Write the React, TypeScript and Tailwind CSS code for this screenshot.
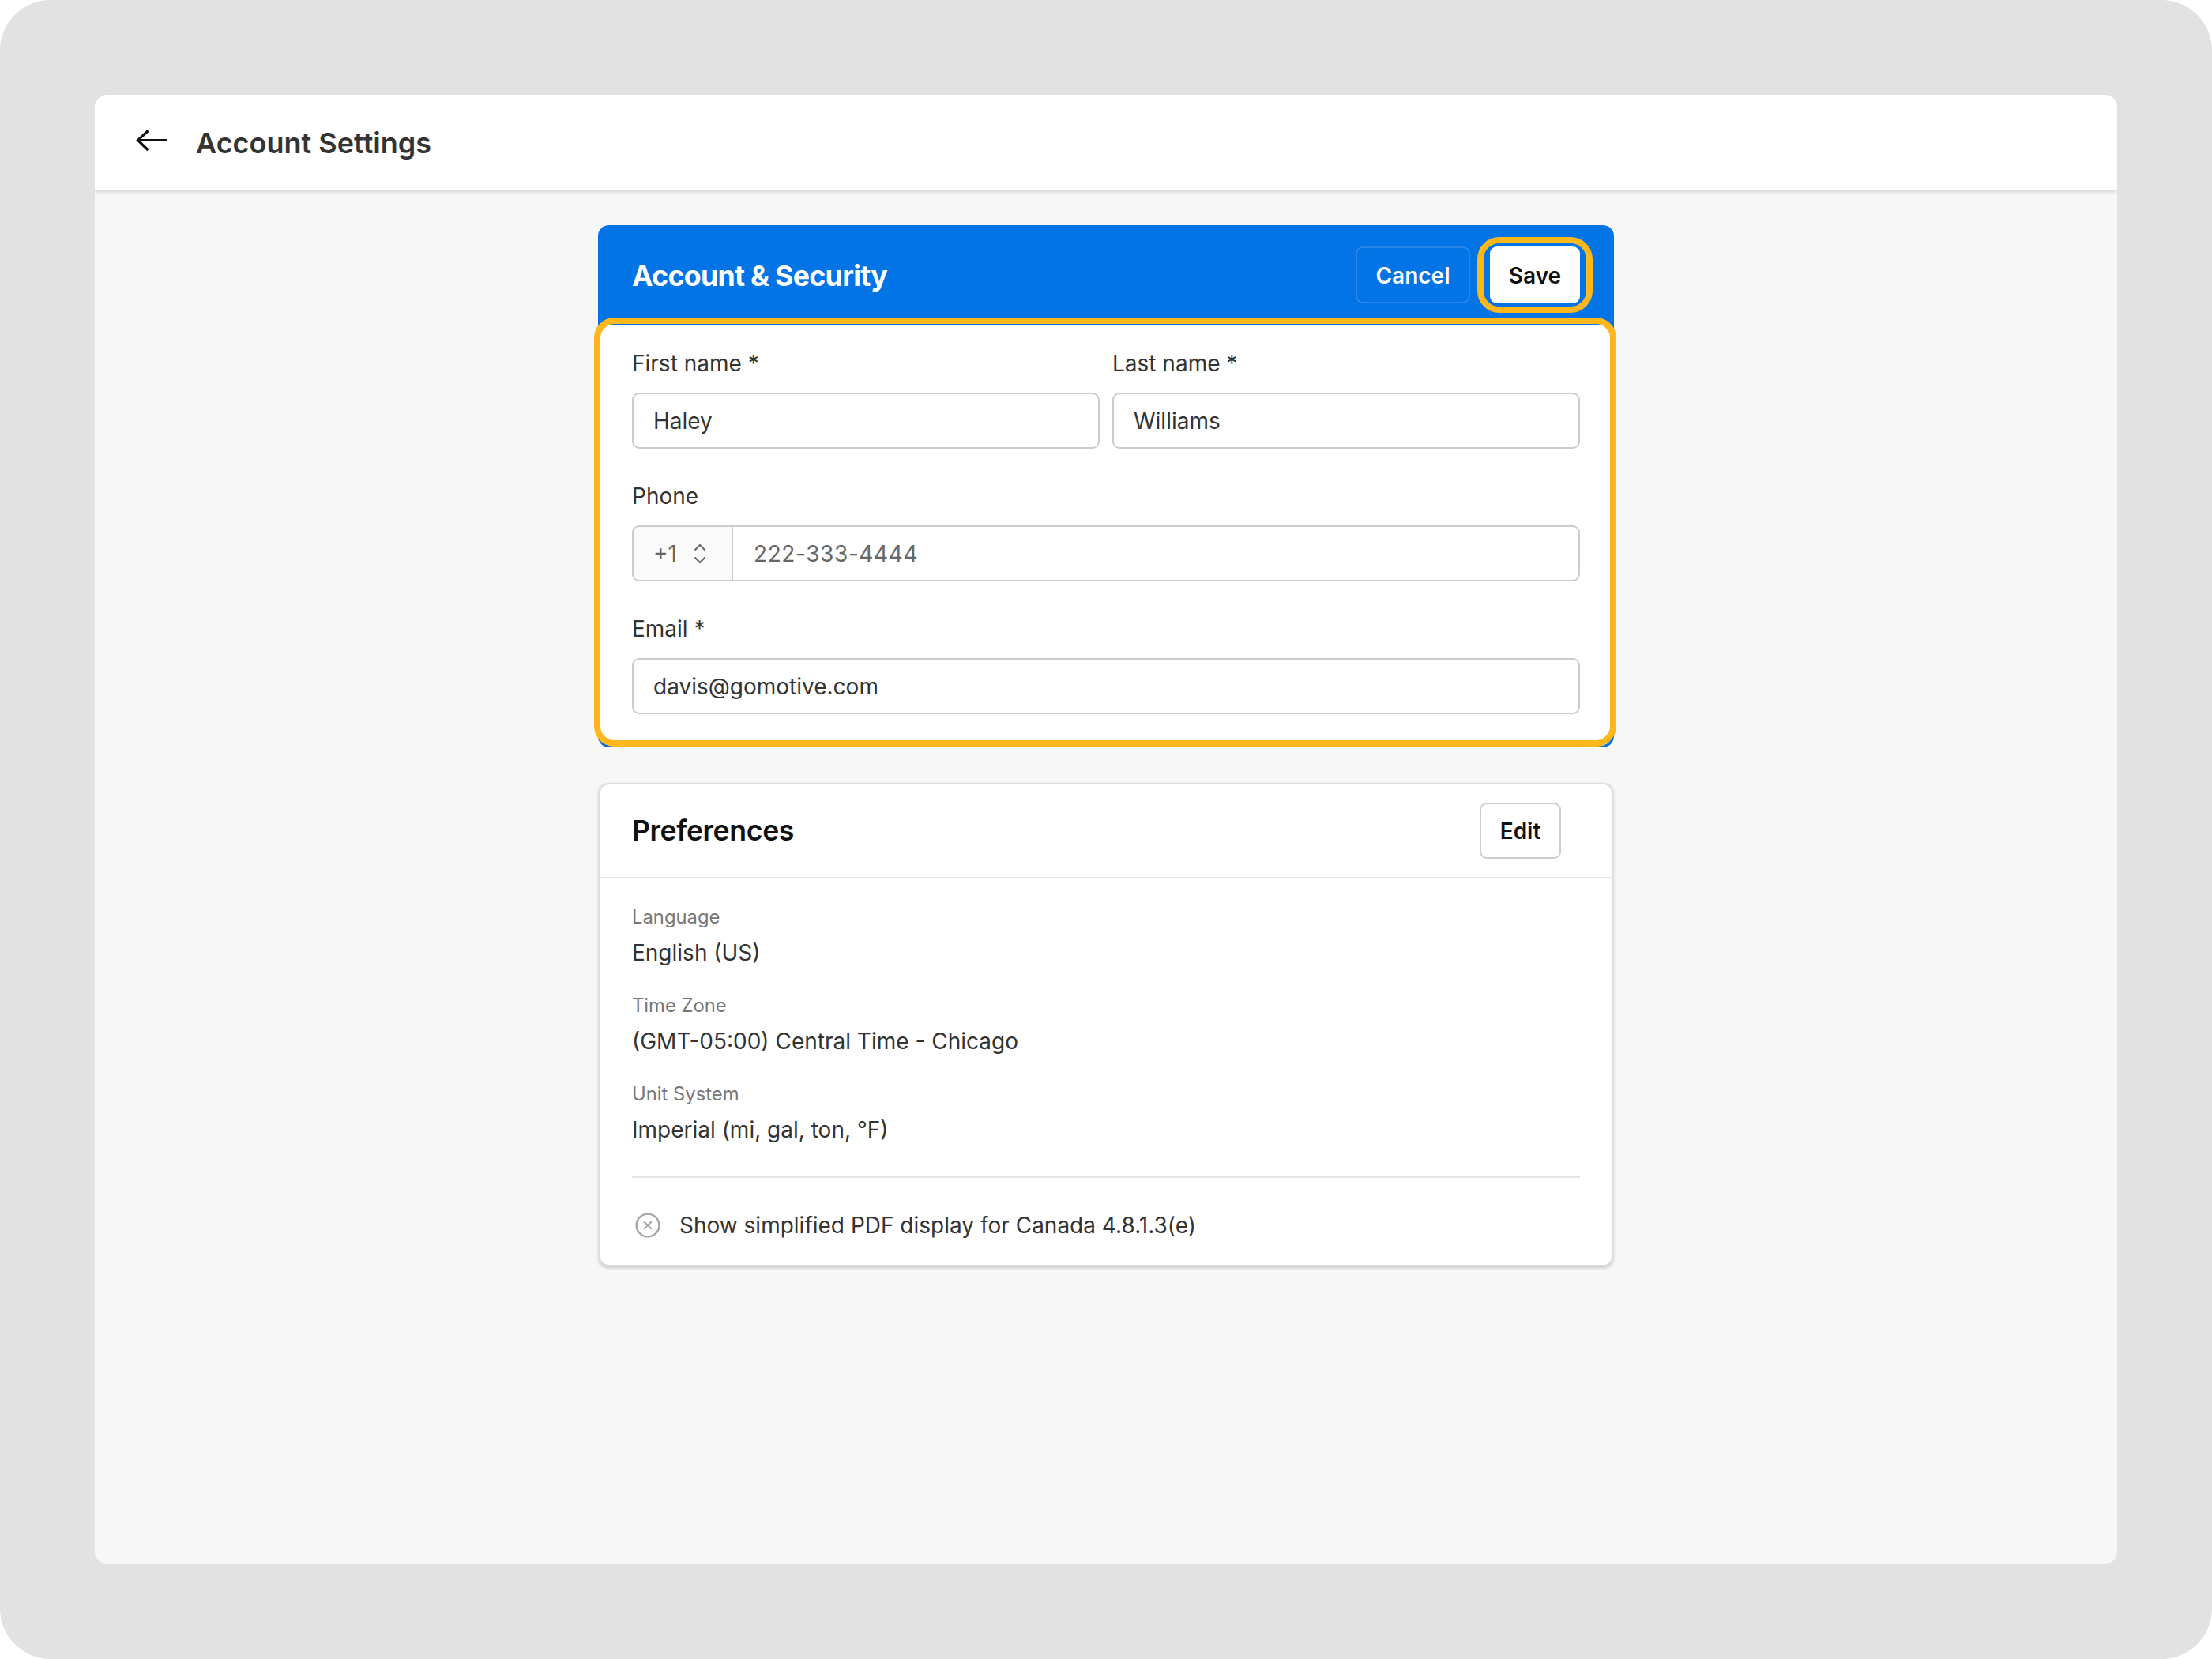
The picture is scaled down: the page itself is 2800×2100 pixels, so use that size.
const inputBox = 'h-[71px] rounded-[9px] border-2 border-[#cccccc] bg-white';
const labelText = 'block mb-[19px] text-[28px] leading-[36px] text-[#333333]';

function BackArrow() {
  return (
    <svg width="40" height="28" viewBox="0 0 40 28" fill="none" stroke="#111111" strokeWidth="3.2" aria-hidden>
      <path d="M39 13.5H3" />
      <path d="M15.5 1.5L2.5 13.5L15.5 26" />
    </svg>
  );
}

function ChevronPair() {
  return (
    <svg width="18" height="28" viewBox="0 0 18 28" fill="none" stroke="#666666" strokeWidth="2" aria-hidden>
      <path d="M2.5 9.5L9 3L15.5 9.5" />
      <path d="M2.5 18.5L9 25L15.5 18.5" />
    </svg>
  );
}

function XCircle() {
  return (
    <svg width="32" height="32" viewBox="0 0 32 32" fill="none" stroke="#a6a6a6" strokeWidth="2.4" aria-hidden>
      <circle cx="16" cy="16" r="14.4" />
      <path d="M11.2 11.2L20.8 20.8M20.8 11.2L11.2 20.8" strokeWidth="2" />
    </svg>
  );
}

function Field({ label, value, className }: { label: string; value: string; className?: string }) {
  return (
    <div className={className}>
      <label className={labelText}>{label}</label>
      <div className={`${inputBox} flex items-center px-[25px] text-[28px] text-[#333333]`}>{value}</div>
    </div>
  );
}

function Pref({ label, value }: { label: string; value: string }) {
  return (
    <div>
      <div className="text-[23.8px] leading-[36px] text-[#777777]">{label}</div>
      <div className="mt-[9px] text-[28px] leading-[36px] text-[#333333]">{value}</div>
    </div>
  );
}

export default function App() {
  return (
    <div className="w-[2800px] h-[2100px] bg-white font-['Inter',sans-serif]">
      <div className="h-full rounded-[64px] bg-[#e2e2e2] p-[120px]">
        <div className="h-full rounded-[16px] bg-[#f7f7f7] overflow-hidden">
          <header className="flex h-[120px] items-center bg-white pl-[52px] shadow-[0_2px_6px_rgba(0,0,0,0.18)]">
            <div className="mb-[5px] mr-[36px] flex"><BackArrow /></div>
            <h1 className="pt-[1px] text-[36px] font-semibold text-[#333333]">Account Settings</h1>
          </header>

          <main className="mx-auto flex w-[1286px] flex-col gap-[45px] pt-[45px]">
            <section className="relative rounded-[14px] bg-[#0274e6]">
              <div className="flex h-[126px] items-center justify-between pl-[43px] pr-[43px]">
                <h2 className="pt-[3px] text-[35.7px] font-bold tracking-[-0.7px] text-white">Account &amp; Security</h2>
                <div className="flex items-center gap-[25px]">
                  <button className="h-[72px] w-[145px] rounded-[9px] border-2 border-[#2a87ea] pt-[1px] text-[28px] font-semibold text-white">Cancel</button>
                  <div className="relative">
                    <button className="h-[72px] w-[114px] rounded-[9px] bg-white pt-[1px] text-[28px] font-semibold text-[#111111]">Save</button>
                    <div className="absolute -inset-x-[16px] -inset-y-[12px] rounded-[28px] border-[8px] border-[#ffb81c]" />
                  </div>
                </div>
              </div>
              <div className="mx-[3px] mb-[2px] rounded-[14px] bg-white px-[40px] pb-[40px] pt-[31px]">
                <div className="flex gap-[16px]">
                  <Field label="First name *" value="Haley" className="flex-1" />
                  <Field label="Last name *" value="Williams" className="flex-1" />
                </div>
                <div className="mt-[42px]">
                  <label className={labelText}>Phone</label>
                  <div className={`${inputBox} flex overflow-hidden text-[28px]`}>
                    <div className="flex w-[126px] items-center border-r-2 border-[#cccccc] bg-[#fafafa] pl-[25px] text-[#666666]">
                      <span className="mr-[20px]">+1</span>
                      <ChevronPair />
                    </div>
                    <div className="flex items-center pl-[26px] tracking-[0.6px] text-[#666666]">222-333-4444</div>
                  </div>
                </div>
                <Field label="Email *" value="davis@gomotive.com" className="mt-[42px]" />
              </div>
              <div className="absolute bottom-[1px] left-[-5px] right-[-3px] top-[117px] rounded-[26px] border-[8px] border-[#ffb81c]" />
            </section>

            <section className="mx-auto w-[1284px] rounded-[12px] border-2 border-[#dcdcdc] bg-white shadow-[0_2px_4px_rgba(0,0,0,0.2)]">
              <div className="flex h-[119px] items-center justify-between border-b-2 border-[#e4e4e4] pl-[40px] pr-[64px]">
                <h2 className="text-[35.7px] font-semibold tracking-[-0.4px] text-[#111111]">Preferences</h2>
                <button className="h-[71px] w-[103px] rounded-[9px] border-2 border-[#cccccc] pt-[1px] text-[28px] font-semibold text-[#111111]">Edit</button>
              </div>
              <div className="px-[40px] pt-[31px]">
                <div className="flex flex-col gap-[31px]">
                  <Pref label="Language" value="English (US)" />
                  <Pref label="Time Zone" value="(GMT-05:00) Central Time - Chicago" />
                  <Pref label="Unit System" value="Imperial (mi, gal, ton, °F)" />
                </div>
                <div className="mt-[41px] border-t-2 border-[#e4e4e4]" />
                <div className="flex h-[110px] items-center pl-[4px] pt-[10px]">
                  <XCircle />
                  <span className="ml-[24px] text-[28px] text-[#333333]">Show simplified PDF display for Canada 4.8.1.3(e)</span>
                </div>
              </div>
            </section>
          </main>
        </div>
      </div>
    </div>
  );
}
